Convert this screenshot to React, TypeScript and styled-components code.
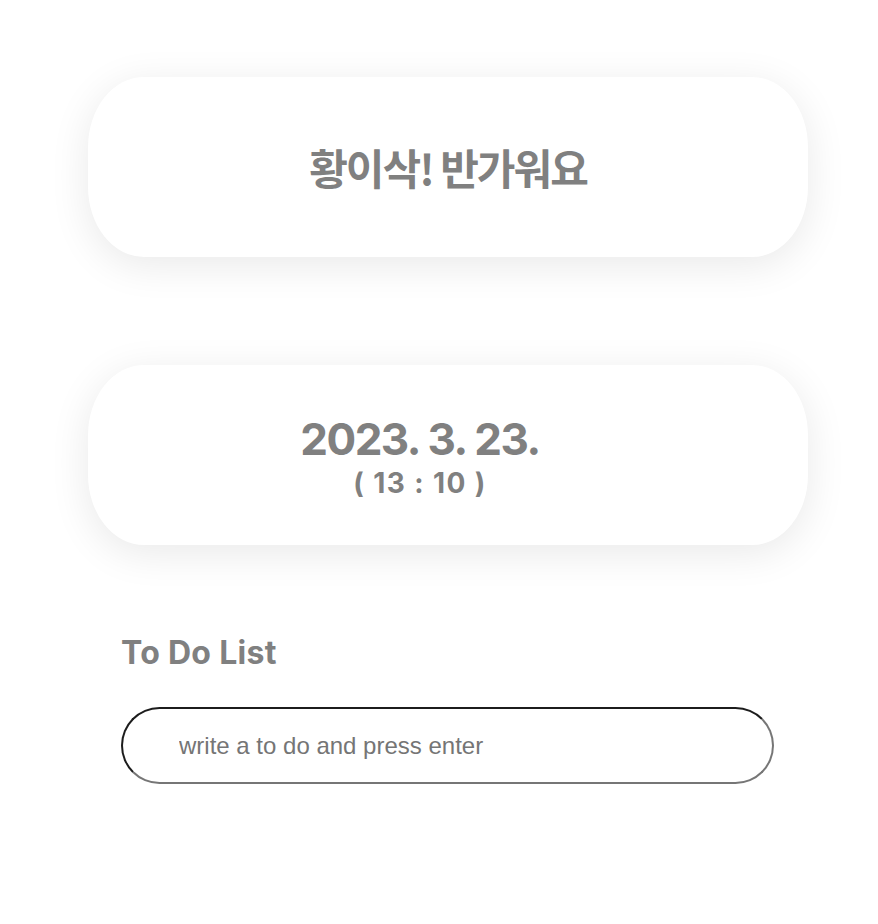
import React from "react";
import styled, { createGlobalStyle } from "styled-components";

const GlobalStyle = createGlobalStyle`
  body {
    margin: 8px;
    background: #ffffff;
    font-family: Inter, "Noto Sans CJK KR", sans-serif;
  }
`;

const Page = styled.main`
  display: flex;
  flex-direction: column;
  padding: 69px 0 0 80px;
  width: 720px;
`;

const Card = styled.section`
  width: 720px;
  height: 180px;
  box-sizing: border-box;
  background: #ffffff;
  border-radius: 56px / 70px;
  box-shadow: 0 8px 40px rgba(0, 0, 0, 0.09);
  display: flex;
  flex-direction: column;
  align-items: center;
  justify-content: center;
  color: #808080;
  & + & {
    margin-top: 108px;
  }
`;

const Greeting = styled.h1`
  margin: 0;
  font-family: "Noto Sans CJK KR", sans-serif;
  font-weight: 700;
  font-size: 42px;
  letter-spacing: -2px;
  line-height: 1;
`;

const DateBlock = styled.div`
  display: flex;
  flex-direction: column;
  align-items: center;
  margin-right: 56px;
  padding-top: 6px;
`;

const DateText = styled.div`
  font-family: Inter, sans-serif;
  font-weight: 700;
  font-size: 44px;
  letter-spacing: -1.5px;
  line-height: 44px;
`;

const TimeText = styled.div`
  margin-top: 6px;
  font-family: Inter, sans-serif;
  font-weight: 700;
  font-size: 28px;
  letter-spacing: 1.4px;
  line-height: 32px;
`;

const TodoSection = styled.section`
  display: flex;
  flex-direction: column;
  padding-left: 33px;
  margin-top: 88px;
`;

const TodoTitle = styled.h2`
  margin: 0;
  font-family: Inter, sans-serif;
  font-weight: 700;
  font-size: 32px;
  color: #808080;
  letter-spacing: 0.3px;
  line-height: 40px;
`;

const TodoInput = styled.input`
  margin-top: 34px;
  width: 653px;
  height: 77px;
  box-sizing: border-box;
  border-radius: 40px;
  border-width: 2px;
  border-style: solid;
  border-color: #1c1c1c #767676 #767676 #1c1c1c;
  padding: 0 20px 0 56px;
  font-family: "Liberation Sans", Arial, sans-serif;
  font-size: 24px;
  color: #333;
  outline: none;
  background: #fff;
  &::placeholder {
    color: #757575;
  }
`;

export default function App() {
  return (
    <>
      <GlobalStyle />
      <Page>
        <Card>
          <Greeting>황이삭! 반가워요</Greeting>
        </Card>
        <Card>
          <DateBlock>
            <DateText>2023. 3. 23.</DateText>
            <TimeText>( 13 : 10 )</TimeText>
          </DateBlock>
        </Card>
        <TodoSection>
          <TodoTitle>To Do List</TodoTitle>
          <TodoInput type="text" placeholder="write a to do and press enter" />
        </TodoSection>
      </Page>
    </>
  );
}
